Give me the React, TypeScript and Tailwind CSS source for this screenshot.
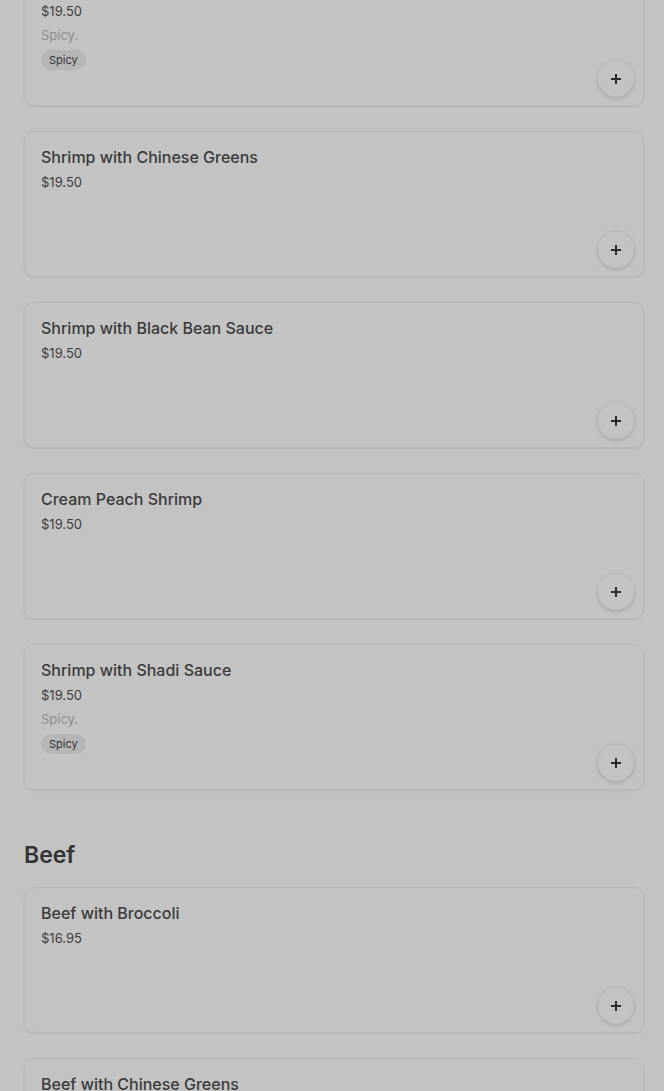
import React from 'react';

type Item = { name: string; price: string; spicy?: boolean };

const shrimp: Item[] = [
  { name: 'Shrimp with Garlic Sauce', price: '$19.50', spicy: true },
  { name: 'Shrimp with Chinese Greens', price: '$19.50' },
  { name: 'Shrimp with Black Bean Sauce', price: '$19.50' },
  { name: 'Cream Peach Shrimp', price: '$19.50' },
  { name: 'Shrimp with Shadi Sauce', price: '$19.50', spicy: true },
];

const beef: Item[] = [
  { name: 'Beef with Broccoli', price: '$16.95' },
  { name: 'Beef with Chinese Greens', price: '$16.95' },
];

const PlusIcon = () => (
  <svg width="12" height="12" viewBox="0 0 12 12" fill="none">
    <path d="M6 1v10M1 6h10" stroke="#2b2b2b" strokeWidth="2" />
  </svg>
);

const ItemCard = ({ item }: { item: Item }) => (
  <div className="relative h-[146px] w-[620px] rounded-[10px] border border-[#b9b9b9] bg-[#c3c3c3] px-4 pt-[13px] shadow-[0_1px_2px_rgba(0,0,0,0.08)]">
    <h3 className="text-[16px] leading-6 font-medium text-[#3a3a3a]">{item.name}</h3>
    <p className="mt-[3px] text-[13px] leading-5 text-[#3d3d3d]">{item.price}</p>
    {item.spicy && (
      <>
        <p className="mt-1 text-[13px] leading-5 text-[#8e8e8e]">Spicy.</p>
        <span className="mt-[5px] inline-flex h-5 items-center rounded-full bg-[#b6b6b6] px-2 text-[11px] text-[#333]">
          Spicy
        </span>
      </>
    )}
    <button className="absolute right-[9px] bottom-2 flex h-9 w-9 items-center justify-center rounded-full bg-[#c3c3c3] shadow-[0_1px_4px_rgba(0,0,0,0.18)]">
      <PlusIcon />
    </button>
  </div>
);

export default function App() {
  return (
    <div className="min-h-[1091px] overflow-hidden bg-[#c3c3c3] font-['Inter','Liberation_Sans',sans-serif]">
      <div className="mt-[-40px] flex flex-col gap-[25px] pl-6">
        {shrimp.map(i => (
          <ItemCard key={i.name} item={i} />
        ))}
      </div>
      <h2 className="mt-[49px] mb-4 pl-6 text-[23px] leading-8 font-semibold text-[#333]">Beef</h2>
      <div className="flex flex-col gap-[25px] pl-6">
        {beef.map(i => (
          <ItemCard key={i.name} item={i} />
        ))}
      </div>
    </div>
  );
}
